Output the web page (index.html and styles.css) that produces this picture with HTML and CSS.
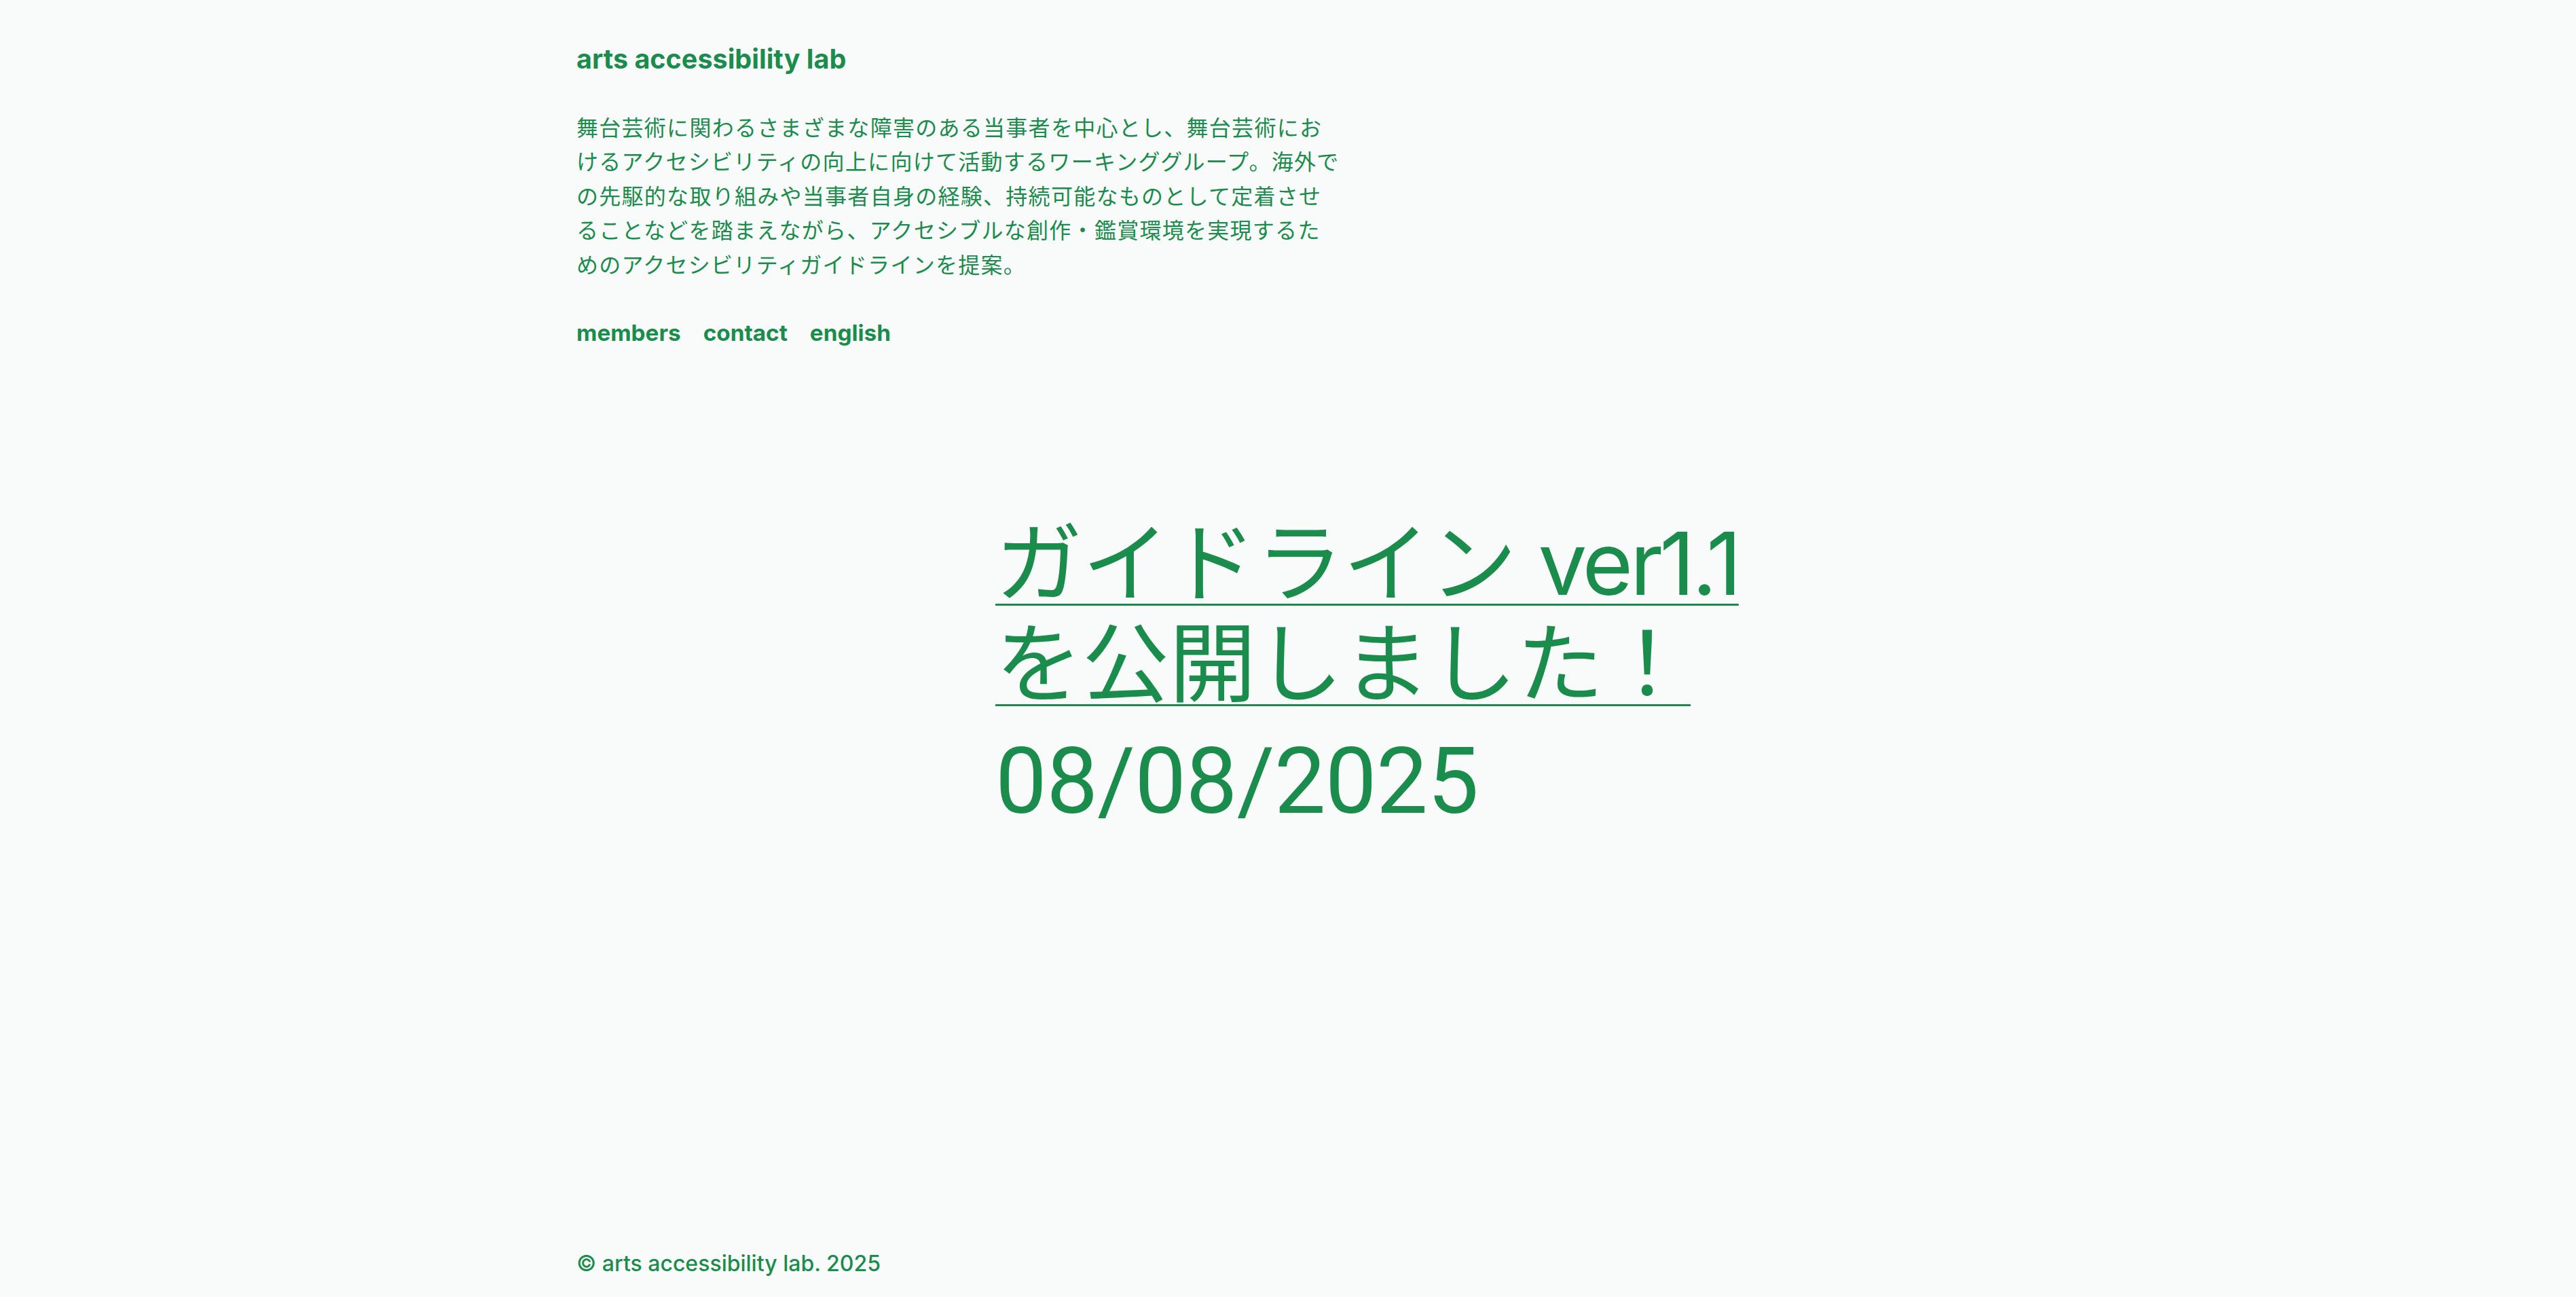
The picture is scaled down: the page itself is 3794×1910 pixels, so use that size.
FILE: index.html
```html
<!DOCTYPE html>
<html lang="ja">
<head>
<meta charset="utf-8">
<title>arts accessibility lab</title>
<link rel="stylesheet" href="styles.css">
</head>
<body>
<div class="page">
  <header class="site-header">
    <h1 class="logo"><a href="#">arts accessibility lab</a></h1>
    <p class="intro">舞台芸術に関わるさまざまな障害のある当事者を中心とし、舞台芸術にお<br>けるアクセシビリティの向上に向けて活動するワーキンググループ。海外で<br>の先駆的な取り組みや当事者自身の経験、持続可能なものとして定着させ<br>ることなどを踏まえながら、アクセシブルな創作・鑑賞環境を実現するた<br>めのアクセシビリティガイドラインを提案。</p>
    <nav class="nav">
      <a href="#">members</a>
      <a href="#">contact</a>
      <a href="#">english</a>
    </nav>
  </header>
  <main class="main">
    <article class="news">
      <h2 class="news-title"><a href="#">ガイドライン<span class="latin"> ver1.1</span><br>を公開しました！</a></h2>
      <p class="news-date">08/08/2025</p>
    </article>
  </main>
  <footer class="footer">© arts accessibility lab. 2025</footer>
</div>
</body>
</html>
```
FILE: styles.css
```css
* { box-sizing: border-box; }
html, body { margin: 0; padding: 0; }
body {
  background: #f9fbfa;
  color: #1a8c4b;
  font-family: Inter, "Noto Sans CJK JP", sans-serif;
}
a { color: inherit; text-decoration: none; }

.page {
  width: 2096px;
  margin: 0 auto;
  min-height: 100vh;
  display: flex;
  flex-direction: column;
}

.site-header { padding-top: 63px; }

.logo {
  margin: 0;
  font-size: 39.5px;
  line-height: 48px;
  font-weight: 700;
}

.intro {
  margin: 50px 0 0;
  font-family: "Noto Sans CJK JP", sans-serif;
  font-size: 32px;
  line-height: 50.4px;
  letter-spacing: 0.04em;
  font-weight: 400;
  white-space: nowrap;
}

.nav {
  margin-top: 57px;
  display: flex;
  gap: 33px;
  font-size: 33.3px;
  line-height: 40px;
  font-weight: 700;
}

.main {
  flex: 1;
  padding-left: 617px;
  padding-top: 246px;
}

.news-title {
  margin: 0;
  font-size: 128px;
  line-height: 148px;
  font-weight: 400;
}
.news-title a {
  text-decoration: underline;
  text-decoration-thickness: 3px;
  text-underline-offset: 13px;
}
.news-title .latin { letter-spacing: -0.035em; }

.news-date {
  margin: 18px 0 0;
  font-family: Roboto, sans-serif;
  font-size: 135px;
  line-height: 162px;
  letter-spacing: -0.7px;
  font-weight: 400;
}

.footer {
  font-size: 32px;
  line-height: 41px;
  font-weight: 500;
  padding-bottom: 29px;
}
```
